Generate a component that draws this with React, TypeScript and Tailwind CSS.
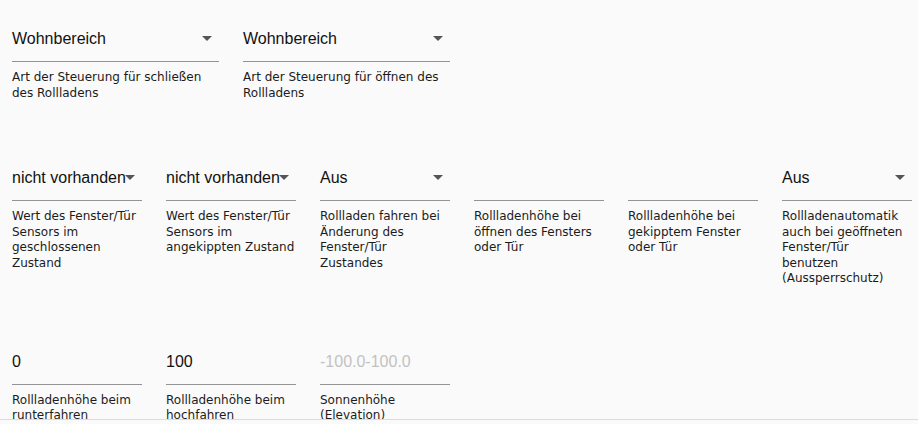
import React from 'react';

type Field = {
  kind: 'select' | 'number';
  value?: string;
  placeholder?: string;
  help: string;
};

const rowOne: Field[] = [
  { kind: 'select', value: 'Wohnbereich', help: 'Art der Steuerung für schließen des Rollladens' },
  { kind: 'select', value: 'Wohnbereich', help: 'Art der Steuerung für öffnen des Rollladens' },
];

const rowTwo: Field[] = [
  { kind: 'select', value: 'nicht vorhanden', help: 'Wert des Fenster/Tür Sensors im geschlossenen Zustand' },
  { kind: 'select', value: 'nicht vorhanden', help: 'Wert des Fenster/Tür Sensors im angekippten Zustand' },
  { kind: 'select', value: 'Aus', help: 'Rollladen fahren bei Änderung des Fenster/Tür Zustandes' },
  { kind: 'number', help: 'Rollladenhöhe bei öffnen des Fensters oder Tür' },
  { kind: 'number', help: 'Rollladenhöhe bei gekipptem Fenster oder Tür' },
  // the original font is a hair wider, so this one breaks before "benutzen"
  { kind: 'select', value: 'Aus', help: 'Rollladenautomatik auch bei geöffneten Fenster/Tür\nbenutzen (Aussperrschutz)' },
];

const rowThree: Field[] = [
  { kind: 'number', value: '0', help: 'Rollladenhöhe beim runterfahren' },
  { kind: 'number', value: '100', help: 'Rollladenhöhe beim hochfahren' },
  { kind: 'number', placeholder: '-100.0-100.0', help: 'Sonnenhöhe (Elevation)' },
];

function DropArrow() {
  return (
    <svg
      viewBox="0 0 24 24"
      className="absolute right-0 top-[2px] w-6 h-6 fill-[#555]"
      aria-hidden="true"
    >
      <path d="M7 10l5 5 5-5z" />
    </svg>
  );
}

function FormField({ field, width }: { field: Field; width: string }) {
  return (
    <div className={`flex flex-col shrink-0 ${width}`}>
      <div className="relative h-[38px] pt-[5px] border-b border-[#949494]">
        <div
          className={`text-[16px] leading-[19px] whitespace-nowrap ${
            field.value ? 'text-[#111]' : 'text-[#c2c2c2]'
          }`}
        >
          {field.value ?? field.placeholder ?? ''}
        </div>
        {field.kind === 'select' && <DropArrow />}
      </div>
      <p className="mt-[8px] text-[12px] leading-[15.5px] text-[#1c1c1c] whitespace-pre-line font-['DejaVu_Sans',sans-serif]">
        {field.help}
      </p>
    </div>
  );
}

export default function App() {
  return (
    <div className="w-[918px] h-[424px] bg-[#fafafa] font-['Liberation_Sans',Arial,sans-serif] overflow-hidden">
      <div className="h-[419px] overflow-hidden pl-[12px] pt-[24px] flex flex-col">
        <div className="flex gap-[24px]">
          {rowOne.map((f, i) => (
            <FormField key={i} field={f} width="w-[207px]" />
          ))}
        </div>
        <div className="flex gap-[24px] mt-[62px]">
          {rowTwo.map((f, i) => (
            <FormField key={i} field={f} width="w-[130px]" />
          ))}
        </div>
        <div className="flex gap-[24px] mt-[60px]">
          {rowThree.map((f, i) => (
            <FormField key={i} field={f} width="w-[130px]" />
          ))}
        </div>
      </div>
      <div className="h-[5px] border-t border-[#dcdcdc]" />
    </div>
  );
}
